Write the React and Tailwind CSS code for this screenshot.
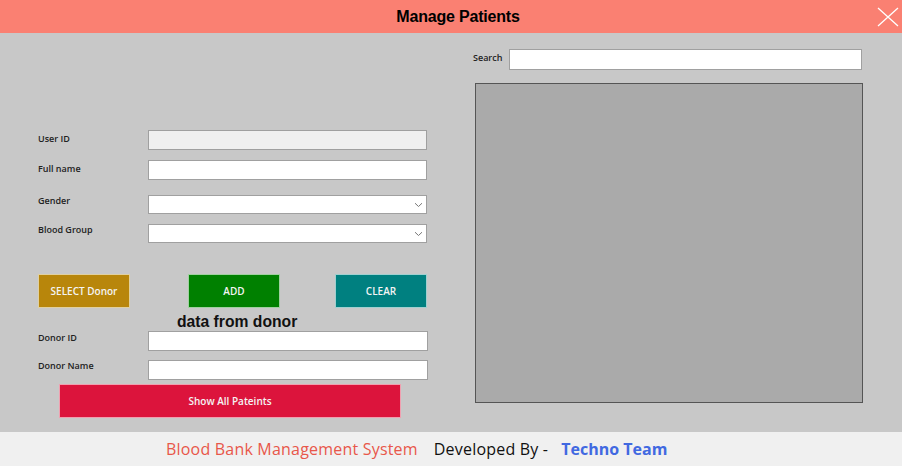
import React from 'react';

const font = { fontFamily: '"Open Sans", "Noto Sans", sans-serif' };

function Field({ label, top, bg = 'bg-white', select = false, h = 'h-[20px]', labelPad = 'pt-[2px]' }) {
  return (
    <div className={`flex items-start ${top}`}>
      <div className={`w-[110px] pl-[38px] shrink-0 box-content text-[9px] font-semibold text-[#222] ${labelPad}`}>{label}</div>
      <div className={`w-[279px] ${h} ${bg} border border-[#a0a0a0] flex items-center justify-end pr-[3px]`}>
        {select && (
          <svg width="9" height="6" viewBox="0 0 9 6" className="text-[#777]">
            <path d="M1 1.2 L4.5 4.5 L8 1.2" fill="none" stroke="currentColor" strokeWidth="1" />
          </svg>
        )}
      </div>
    </div>
  );
}

export default function App() {
  return (
    <div className="w-[902px] h-[466px] flex flex-col overflow-hidden" style={font}>
      {/* title bar */}
      <div className="h-[33px] bg-[#fa8072] flex items-center justify-center relative shrink-0">
        <span className="ml-[14px] text-[16px] font-bold text-black tracking-[-0.2px]" style={{ fontFamily: '"Liberation Sans", Arial, sans-serif' }}>
          Manage Patients
        </span>
        <svg className="absolute right-[3px] top-[7px]" width="22" height="20" viewBox="0 0 22 20">
          <path d="M1 1 L21 19 M21 1 L1 19" stroke="#fff" strokeWidth="1.3" />
        </svg>
      </div>

      {/* body */}
      <div className="flex-1 bg-[#c8c8c8] flex">
        {/* left */}
        <div className="w-[460px] shrink-0 flex flex-col pt-[97px]">
          <Field label="User ID" top="" bg="bg-[#f0f0f0]" labelPad="pt-[2px]" />
          <Field label="Full name" top="mt-[10px]" labelPad="pt-[2px]" />
          <Field label="Gender" top="mt-[15px]" select h="h-[19px]" labelPad="-mt-[1px]" />
          <Field label="Blood Group" top="mt-[10px]" select h="h-[19px]" labelPad="-mt-[1px]" />

          <div className="flex mt-[31px] pl-[38px] gap-[58px]">
            <button className="w-[92px] h-[34px] bg-[#b8860b] border border-[#e0d0a0] text-[#f4f4f4] text-[10px] font-semibold">SELECT Donor</button>
            <button className="w-[92px] h-[34px] bg-[#008000] border border-[#a0d0a0] text-[#f4f4f4] text-[10px] font-semibold">ADD</button>
            <button className="w-[92px] h-[34px] bg-[#008080] border border-[#a0d0d0] text-[#f4f4f4] text-[10px] font-semibold -ml-[3px]">CLEAR</button>
          </div>

          <div className="pl-[177px] h-[23px] text-[15.7px] font-bold text-[#111] leading-[28px]" style={{ fontFamily: '"Liberation Sans", Arial, sans-serif' }}>
            data from donor
          </div>

          <div className="flex items-start">
            <div className="pl-[38px] w-[148px] text-[9px] font-semibold text-[#222] leading-[10px] pt-[2px]">Donor ID</div>
            <div className="w-[280px] h-[20px] bg-white border border-[#a0a0a0]" />
          </div>
          <div className="flex items-start mt-[9px]">
            <div className="pl-[38px] w-[148px] text-[9px] font-semibold text-[#222] leading-[10px] pt-[1px]">Donor Name</div>
            <div className="w-[280px] h-[20px] bg-white border border-[#a0a0a0]" />
          </div>

          <div className="pl-[59px] mt-[4px]">
            <button className="w-[342px] h-[34px] bg-[#dc143c] border border-[#f0a0b0] text-[#f4f4f4] text-[10px] font-semibold">Show All Pateints</button>
          </div>
        </div>

        {/* right */}
        <div className="flex-1 flex flex-col">
          <div className="flex items-start mt-[16px]">
            <span className="ml-[13px] w-[36px] text-[9px] font-semibold text-[#222] leading-[10px] pt-[4px]">Search</span>
            <div className="w-[353px] h-[21px] bg-white border border-[#a0a0a0]" />
          </div>
          <div className="ml-[15px] mt-[13px] w-[388px] h-[320px] bg-[#aaaaaa] border border-[#555]" />
        </div>
      </div>

      {/* footer */}
      <div className="h-[34px] bg-[#f0f0f0] flex items-center pl-[166px] shrink-0 text-[16px]" style={{ fontFamily: '"Open Sans", sans-serif' }}>
        <span className="text-[#e8574a] tracking-[0.2px]">Blood Bank Management System</span>
        <span className="ml-[16px] text-[#111] tracking-[0.2px]">Developed By -</span>
        <span className="ml-[13px] text-[#4169e1] font-bold">Techno Team</span>
      </div>
    </div>
  );
}
